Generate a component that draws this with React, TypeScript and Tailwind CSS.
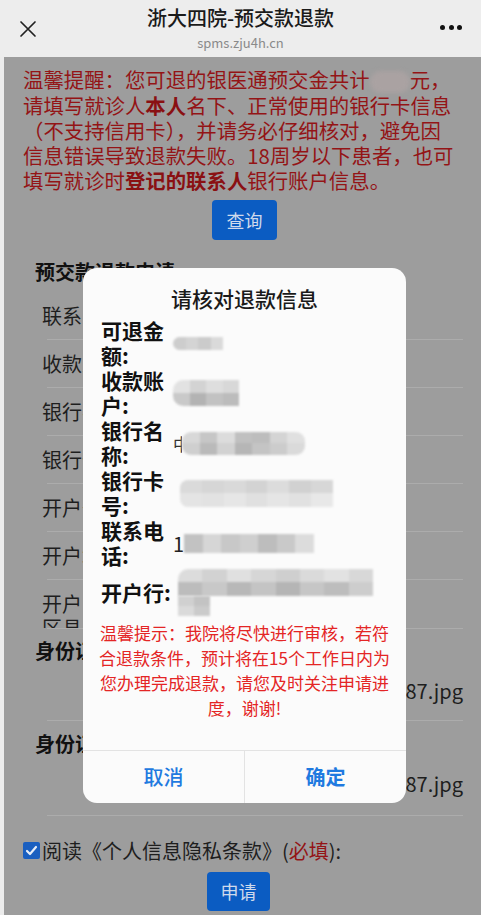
import React from "react";

const FONT = { fontFamily: '"Noto Sans CJK SC", "Noto Sans", sans-serif' };

type Cells = string[][];

function Mosaic({ cells, className }: { cells: Cells; className: string }) {
  return (
    <div className={`flex flex-col overflow-hidden blur-[1px] ${className}`}>
      {cells.map((row, i) => (
        <div key={i} className="flex flex-1">
          {row.map((c, j) => (
            <span key={j} className={`flex-1 ${c}`} />
          ))}
        </div>
      ))}
    </div>
  );
}

const BLOBS: Record<string, Cells> = {
  amount: [["bg-[#cdcdcd]", "bg-[#d4d4d4]", "bg-[#cbcbcb]", "bg-[#dadada]"]],
  account: [
    ["bg-[#e2e2e2]", "bg-[#d3d3d3]", "bg-[#dedede]", "bg-[#d8d8d8]"],
    ["bg-[#c9c9c9]", "bg-[#b3b3b3]", "bg-[#c2c2c2]", "bg-[#bcbcbc]"],
  ],
  bank: [
    ["bg-[#d8d8d8]", "bg-[#c6c6c6]", "bg-[#dcdcdc]", "bg-[#c0c0c0]", "bg-[#bdbdbd]", "bg-[#d4d4d4]", "bg-[#e0e0e0]"],
    ["bg-[#cfcfcf]", "bg-[#bababa]", "bg-[#d2d2d2]", "bg-[#b6b6b6]", "bg-[#c4c4c4]", "bg-[#cccccc]", "bg-[#dadada]"],
  ],
  card: [
    ["bg-[#dadada]", "bg-[#d6d6d6]", "bg-[#d9d9d9]", "bg-[#d3d3d3]", "bg-[#dcdcdc]", "bg-[#d1d1d1]", "bg-[#d7d7d7]"],
    ["bg-[#e4e4e4]", "bg-[#e2e2e2]", "bg-[#e6e6e6]", "bg-[#e0e0e0]", "bg-[#e5e5e5]", "bg-[#e1e1e1]", "bg-[#e8e8e8]"],
  ],
  phone: [
    ["bg-[#c2c2c2]", "bg-[#d6d6d6]", "bg-[#c8c8c8]", "bg-[#cfcfcf]", "bg-[#bdbdbd]", "bg-[#c9c9c9]", "bg-[#dcdcdc]"],
  ],
  branch: [
    ["bg-[#dcdcdc]", "bg-[#d2d2d2]", "bg-[#e0e0e0]", "bg-[#d6d6d6]", "bg-[#cfcfcf]", "bg-[#dadada]", "bg-[#e2e2e2]", "bg-[#d8d8d8]"],
    ["bg-[#bcbcbc]", "bg-[#c8c8c8]", "bg-[#b8b8b8]", "bg-[#c4c4c4]", "bg-[#b5b5b5]", "bg-[#c6c6c6]", "bg-[#bdbdbd]", "bg-[#cdcdcd]"],
  ],
  branch2: [["bg-[#d0d0d0]", "bg-[#c3c3c3]"], ["bg-[#dadada]", "bg-[#cbcbcb]"]],
};

const FORM_ROWS = ["联系电话:", "收款人:", "银行名称:", "银行卡号:", "开户省份:", "开户城市:"];

function Row({ label }: { label: string }) {
  return (
    <>
      <div className="h-[47px] flex items-center pl-[38px] text-[20px] leading-[25px] text-[#1e1e1e]">
        {label}
      </div>
      <div className="h-px ml-[43px] mr-[18px] bg-[#acacac]" />
    </>
  );
}

function Dialog() {
  return (
    <div className="absolute left-[83px] top-[268px] w-[323px] bg-[#fbfbfb] rounded-[14px] flex flex-col overflow-hidden">
      <div className="pt-[18px] pb-[7px] text-center text-[21px] leading-[25px] text-[#1a1a1a] font-medium">
        请核对退款信息
      </div>

      <table className="ml-[18px] border-collapse">
        <tbody className="text-[21px] leading-[25px] font-bold text-[#111]">
          <tr>
            <td className="w-[72px] p-0 align-middle">可退金额:</td>
            <td className="p-0 align-middle">
              <Mosaic cells={BLOBS.amount} className="w-[50px] h-[13px] rounded-l-full" />
            </td>
          </tr>
          <tr>
            <td className="p-0 align-middle">收款账户:</td>
            <td className="p-0 align-middle">
              <Mosaic cells={BLOBS.account} className="w-[66px] h-[26px] rounded-l-[10px]" />
            </td>
          </tr>
          <tr>
            <td className="p-0 align-middle">银行名称:</td>
            <td className="p-0 align-middle">
              <div className="flex items-center">
                <span className="w-[9px] overflow-hidden text-[17px] font-normal text-[#333]">中</span>
                <Mosaic cells={BLOBS.bank} className="w-[123px] h-[23px] rounded-[9px]" />
              </div>
            </td>
          </tr>
          <tr>
            <td className="p-0 align-middle">银行卡号:</td>
            <td className="p-0 align-middle">
              <div className="flex items-center pl-[7px]">
                <Mosaic cells={BLOBS.card} className="w-[153px] h-[27px] rounded-l-[8px]" />
              </div>
            </td>
          </tr>
          <tr>
            <td className="p-0 align-middle">联系电话:</td>
            <td className="p-0 align-middle">
              <div className="flex items-center">
                <span className="w-[11px] text-[20px] font-normal text-[#222]">1</span>
                <Mosaic cells={BLOBS.phone} className="w-[130px] h-[19px]" />
              </div>
            </td>
          </tr>
          <tr className="h-[48px]">
            <td className="p-0 align-middle">开户行:</td>
            <td className="p-0 align-middle">
              <div className="flex flex-col pl-[5px]">
                <Mosaic cells={BLOBS.branch} className="w-[195px] h-[27px] rounded-tl-[10px]" />
                <Mosaic cells={BLOBS.branch2} className="w-[32px] h-[20px]" />
              </div>
            </td>
          </tr>
        </tbody>
      </table>

      <p className="mt-[4px] pb-[30px] text-center text-[17px] leading-[25px] text-[#e42525]">
        温馨提示：我院将尽快进行审核，若符
        <br />
        合退款条件，预计将在15个工作日内为
        <br />
        您办理完成退款，请您及时关注申请进
        <br />
        度，谢谢!
      </p>

      <div className="h-[53px] flex border-t border-[#e3e3e3] text-[20px] text-[#1f7ae0]">
        <button className="flex-1 font-medium">取消</button>
        <div className="w-px bg-[#e3e3e3]" />
        <button className="flex-1 font-bold">确定</button>
      </div>
    </div>
  );
}

export default function App() {
  return (
    <div className="relative w-[481px] h-[915px] overflow-hidden flex flex-col bg-[#ececec]" style={FONT}>
      {/* browser top bar */}
      <div className="h-[57px] shrink-0 flex bg-[#ededed]">
        <div className="w-[56px] flex items-center justify-center">
          <svg width="18" height="18" viewBox="0 0 18 18" stroke="#222" strokeWidth="1.7" strokeLinecap="round">
            <path d="M2 2 L16 16 M16 2 L2 16" />
          </svg>
        </div>
        <div className="flex-1 flex flex-col items-center">
          <div className="mt-[6px] text-[20px] leading-[24px] font-medium text-[#1a1a1a]">浙大四院-预交款退款</div>
          <div className="mt-[5px] text-[13px] leading-[16px] text-[#8a8a8a]">spms.zju4h.cn</div>
        </div>
        <div className="w-[56px] flex items-center justify-end gap-[3.5px] pr-[19px] pb-[2px]">
          <span className="w-[5px] h-[5px] rounded-full bg-[#111]" />
          <span className="w-[5px] h-[5px] rounded-full bg-[#111]" />
          <span className="w-[5px] h-[5px] rounded-full bg-[#111]" />
        </div>
      </div>

      {/* page, dimmed behind the dialog */}
      <div className="flex-1 ml-[4px] bg-[#9d9d9d] flex flex-col">
        <p className="pt-[10px] pl-[19px] text-[20.4px] leading-[25px] text-[#941416]">
          温馨提醒：您可退的银医通预交金共计
          <span className="inline-block align-middle w-[40px] h-[22px] rounded-full bg-[#aaa2a2] blur-[2px]" />
          元，
          <br />
          请填写就诊人<b className="text-[#8a1012]">本人</b>名下、正常使用的银行卡信息
          <br />
          （不支持信用卡），并请务必仔细核对，避免因
          <br />
          信息错误导致退款失败。18周岁以下患者，也可
          <br />
          填写就诊时<b className="text-[#8a1012]">登记的联系人</b>银行账户信息。
        </p>

        <div className="mt-[7px] flex justify-center pl-[4px]">
          <button className="w-[65px] h-[40px] rounded-[4px] bg-[#0b5cc2] text-[18px] text-[#cfdaec]">查询</button>
        </div>

        <div className="mt-[19px] pl-[31px] text-[20px] leading-[25px] font-bold text-[#111]">预交款退款申请:</div>

        <div className="mt-[8px]">
          {FORM_ROWS.map((l) => (
            <Row key={l} label={l} />
          ))}
          <div className="h-[48px] overflow-hidden pt-[12px] pl-[38px] w-[86px] text-[20px] leading-[24px] text-[#1e1e1e]">
            开户区县:
          </div>
          <div className="h-px ml-[43px] mr-[18px] bg-[#acacac]" />
        </div>

        <div className="pt-[9px] pb-[17px] text-[20px] leading-[25px]">
          <div className="pl-[31px] font-bold text-[#111]">身份证正面</div>
          <div className="mt-[15px] pr-[18px] text-right text-[#1e1e1e]">wx_camera_1686811187.jpg</div>
        </div>
        <div className="h-px ml-[43px] mr-[18px] bg-[#acacac]" />

        <div className="pt-[10px] pb-[19px] text-[20px] leading-[25px]">
          <div className="pl-[31px] font-bold text-[#111]">身份证背面</div>
          <div className="mt-[15px] pr-[18px] text-right text-[#1e1e1e]">wx_camera_1686811287.jpg</div>
        </div>
        <div className="h-px ml-[43px] mr-[18px] bg-[#acacac]" />

        <div className="mt-[22px] pl-[19px] flex items-center text-[20px] leading-[25px] text-[#1e1e1e]">
          <span className="w-[17px] h-[17px] rounded-[2px] bg-[#1a5fc0] flex items-center justify-center mr-[2px]">
            <svg width="13" height="13" viewBox="0 0 13 13" fill="none" stroke="#e8eef8" strokeWidth="2.2" strokeLinecap="round" strokeLinejoin="round">
              <path d="M2 7 L5 10 L11 3" />
            </svg>
          </span>
          阅读《个人信息隐私条款》(<span className="text-[#941416]">必填</span>):
        </div>

        <div className="mt-[9px] flex justify-center pr-[8px]">
          <button className="w-[63px] h-[39px] rounded-[4px] bg-[#0b5cc2] text-[18px] text-[#cfdaec]">申请</button>
        </div>
      </div>

      <Dialog />
    </div>
  );
}
